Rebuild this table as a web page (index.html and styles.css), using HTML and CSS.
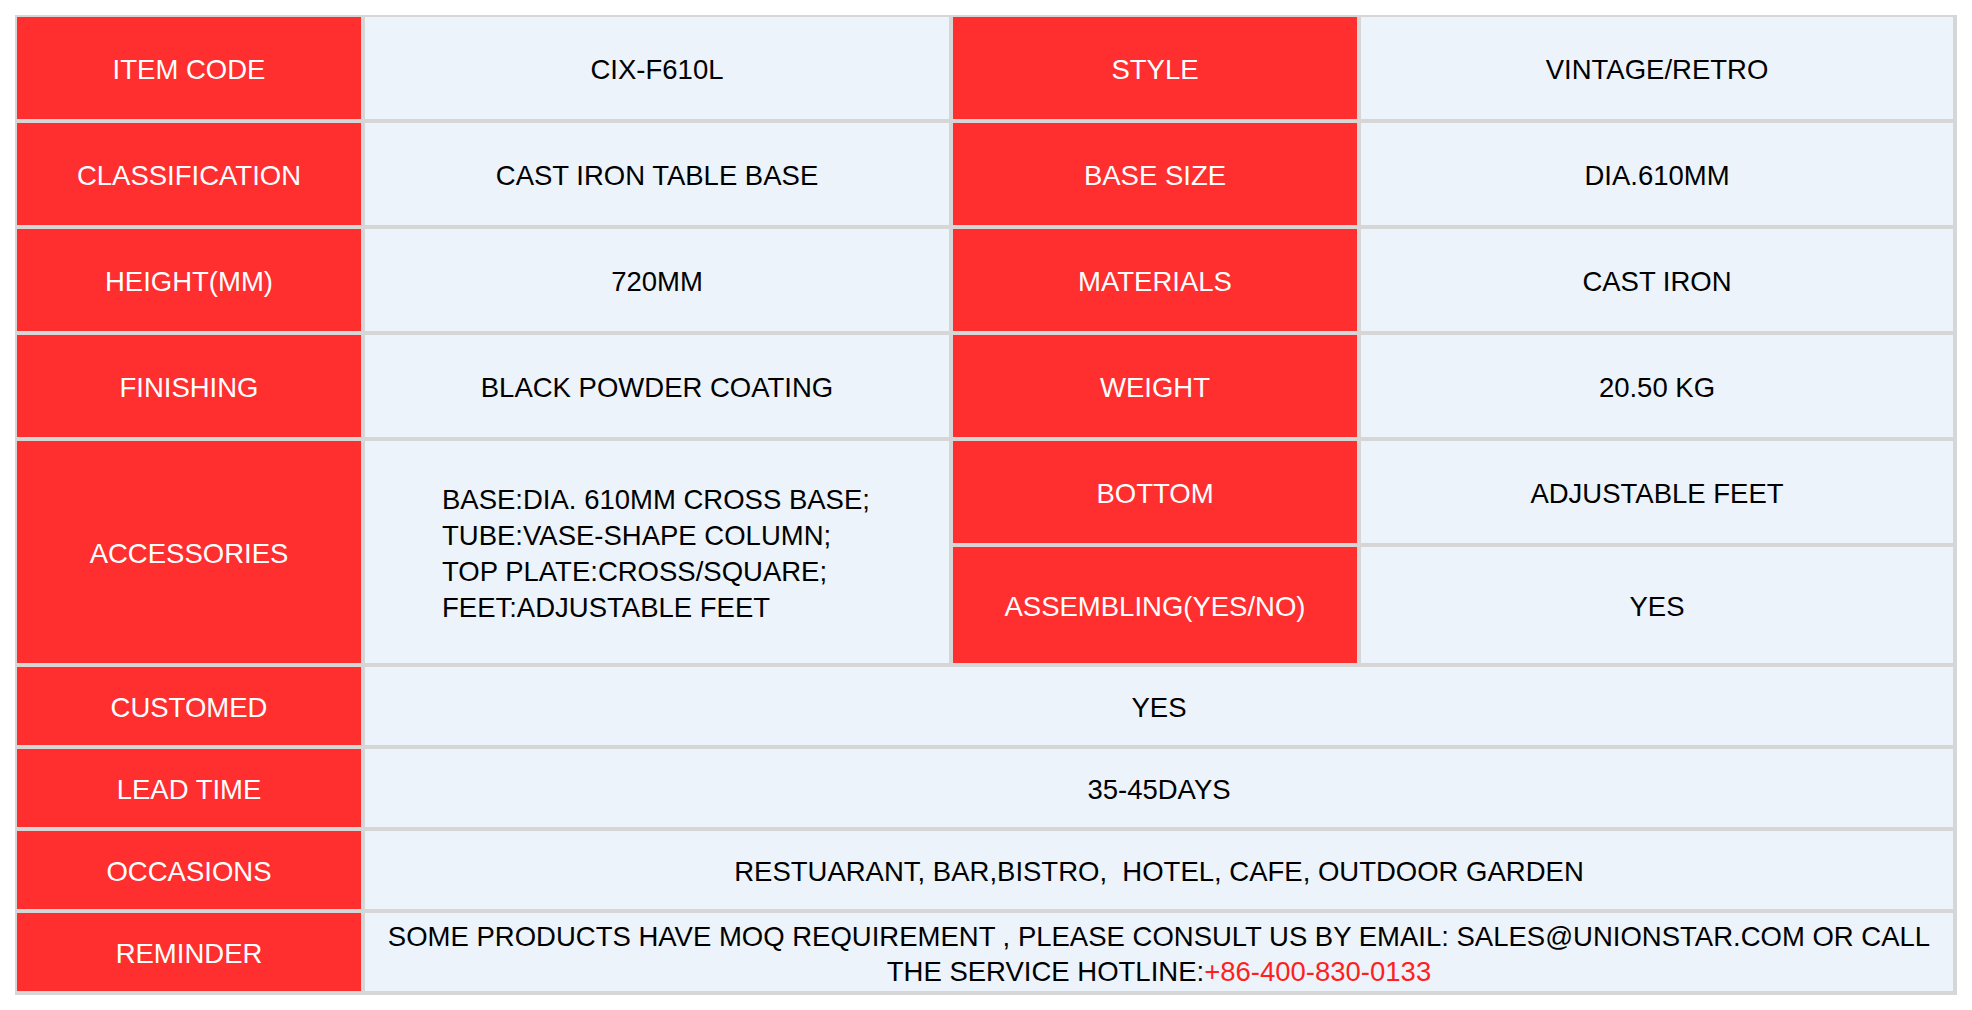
FILE: index.html
```html
<!DOCTYPE html>
<html lang="en">
<head>
<meta charset="utf-8">
<title>CIX-F610L Specification</title>
<link rel="stylesheet" href="styles.css">
</head>
<body>
<div class="sheet">
  <div class="cell label">ITEM CODE</div>
  <div class="cell value">CIX-F610L</div>
  <div class="cell label">STYLE</div>
  <div class="cell value">VINTAGE/RETRO</div>

  <div class="cell label">CLASSIFICATION</div>
  <div class="cell value">CAST IRON TABLE BASE</div>
  <div class="cell label">BASE SIZE</div>
  <div class="cell value">DIA.610MM</div>

  <div class="cell label">HEIGHT(MM)</div>
  <div class="cell value">720MM</div>
  <div class="cell label">MATERIALS</div>
  <div class="cell value">CAST IRON</div>

  <div class="cell label">FINISHING</div>
  <div class="cell value">BLACK POWDER COATING</div>
  <div class="cell label">WEIGHT</div>
  <div class="cell value">20.50 KG</div>

  <div class="cell label span-rows">ACCESSORIES</div>
  <div class="cell value span-rows list">
    <div class="text">BASE:DIA. 610MM CROSS BASE;<br>TUBE:VASE-SHAPE COLUMN;<br>TOP PLATE:CROSS/SQUARE;<br>FEET:ADJUSTABLE FEET</div>
  </div>
  <div class="cell label">BOTTOM</div>
  <div class="cell value">ADJUSTABLE FEET</div>
  <div class="cell label">ASSEMBLING(YES/NO)</div>
  <div class="cell value">YES</div>

  <div class="cell label">CUSTOMED</div>
  <div class="cell value span-cols">YES</div>

  <div class="cell label">LEAD TIME</div>
  <div class="cell value span-cols">35-45DAYS</div>

  <div class="cell label">OCCASIONS</div>
  <div class="cell value span-cols">RESTUARANT, BAR,BISTRO, &nbsp;HOTEL, CAFE, OUTDOOR GARDEN</div>

  <div class="cell label">REMINDER</div>
  <div class="cell value span-cols reminder">
    <div class="text">SOME PRODUCTS HAVE MOQ REQUIREMENT , PLEASE CONSULT US BY EMAIL: SALES@UNIONSTAR.COM OR CALL<br>THE SERVICE HOTLINE:<span class="hotline">+86-400-830-0133</span></div>
  </div>
</div>
</body>
</html>
```

FILE: styles.css
```css
html, body {
  margin: 0;
  padding: 0;
  background: #ffffff;
}

body {
  font-family: "Liberation Sans", Arial, sans-serif;
  font-size: 27.5px;
  color: #000000;
}

.sheet {
  display: grid;
  grid-template-columns: 344px 584px 404px 592px;
  grid-template-rows: repeat(5, 102px) 116px repeat(4, 78px);
  gap: 4px;
  padding: 2px 4px 4px 2px;
  margin: 15px 0 0 15px;
  width: max-content;
  background: #d6d6d6;
}

.cell {
  display: flex;
  align-items: center;
  justify-content: center;
  text-align: center;
  line-height: 36px;
  padding-top: 3px;
  white-space: nowrap;
}

.label {
  background: #ff2e2f;
  color: #ffffff;
}

.value {
  background: #ecf3fa;
  color: #000000;
}

.span-rows {
  grid-row: span 2;
}

.span-cols {
  grid-column: span 3;
}

.list {
  justify-content: flex-start;
  text-align: left;
  padding-left: 77px;
}

.reminder {
  line-height: 35px;
}

.hotline {
  color: #ff1f1f;
}
```
